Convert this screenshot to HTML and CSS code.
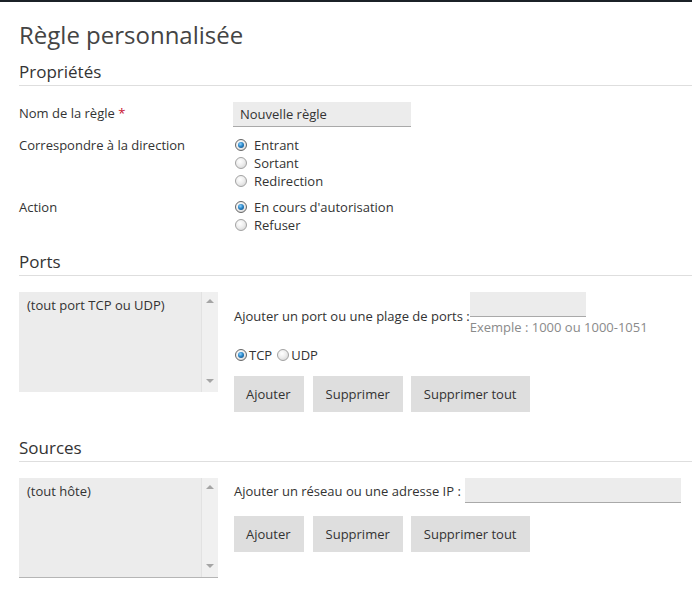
FILE: index.html
```html
<!DOCTYPE html>
<html lang="fr">
<head>
<meta charset="utf-8">
<title>Règle personnalisée</title>
<link rel="stylesheet" href="styles.css">
</head>
<body>
<div class="topbar"></div>
<main class="page">
  <h1 class="title">Règle personnalisée</h1>

  <h2 class="section-title">Propriétés</h2>
  <div class="props">
    <div class="row row-name">
      <div class="label">Nom de la règle <span class="req">*</span></div>
      <div class="field"><input class="text-input name-input" type="text" value="Nouvelle règle"></div>
    </div>
    <div class="row">
      <div class="label">Correspondre à la direction</div>
      <div class="field radios">
        <div class="radio-line"><span class="radio checked"></span>Entrant</div>
        <div class="radio-line"><span class="radio"></span>Sortant</div>
        <div class="radio-line"><span class="radio"></span>Redirection</div>
      </div>
    </div>
    <div class="row">
      <div class="label">Action</div>
      <div class="field radios">
        <div class="radio-line"><span class="radio checked"></span>En cours d'autorisation</div>
        <div class="radio-line"><span class="radio"></span>Refuser</div>
      </div>
    </div>
  </div>

  <h2 class="section-title">Ports</h2>
  <div class="section ports">
    <div class="listbox">
      <div class="list-items">(tout port TCP ou UDP)</div>
      <div class="scrollbar"><span class="sb-btn"><span class="arrow-up"></span></span><span class="sb-btn"><span class="arrow-down"></span></span></div>
    </div>
    <div class="controls">
      <div class="port-row">
        <span class="port-label">Ajouter un port ou une plage de ports :</span>
        <div class="port-field">
          <input class="text-input port-input" type="text">
          <div class="hint">Exemple : 1000 ou 1000-1051</div>
        </div>
      </div>
      <div class="proto-row">
        <span class="radio checked tight"></span><span class="proto">TCP</span>
        <span class="radio tight"></span><span class="proto">UDP</span>
      </div>
      <div class="buttons">
        <button class="btn btn-add">Ajouter</button>
        <button class="btn">Supprimer</button>
        <button class="btn">Supprimer tout</button>
      </div>
    </div>
  </div>

  <h2 class="section-title">Sources</h2>
  <div class="section sources">
    <div class="listbox bordered">
      <div class="list-items">(tout hôte)</div>
      <div class="scrollbar"><span class="sb-btn"><span class="arrow-up"></span></span><span class="sb-btn"><span class="arrow-down"></span></span></div>
    </div>
    <div class="controls">
      <div class="ip-row">
        <span class="ip-label">Ajouter un réseau ou une adresse IP :</span>
        <input class="text-input ip-input" type="text">
      </div>
      <div class="buttons buttons-ip">
        <button class="btn btn-add">Ajouter</button>
        <button class="btn">Supprimer</button>
        <button class="btn">Supprimer tout</button>
      </div>
    </div>
  </div>
</main>
</body>
</html>
```

FILE: styles.css
```css
* { box-sizing: border-box; }

html, body {
  margin: 0;
  padding: 0;
  background: #fff;
}

body {
  font-family: "Open Sans", "Noto Sans", sans-serif;
  font-size: 13px;
  line-height: 18px;
  color: #333;
}

.topbar {
  height: 2px;
  background: #1b2127;
}

.page {
  padding-left: 19px;
}

.title {
  margin: 17px 0 0;
  font-size: 24px;
  line-height: 32px;
  font-weight: 400;
  color: #444;
}

.section-title {
  margin: 9px 0 0;
  font-size: 17px;
  line-height: 23px;
  font-weight: 400;
  color: #333;
  padding-bottom: 2px;
  border-bottom: 1px solid #dedede;
}

.section-title + .props,
.section-title + .section {
  margin-top: 16px;
}

.props {
  display: flex;
  flex-direction: column;
  gap: 8px;
  margin-bottom: 16px;
}

.props + .section-title { margin-top: 0; }

.row {
  display: flex;
  align-items: flex-start;
}

.row-name { margin-bottom: 1px; }

.label {
  width: 215px;
  flex: none;
}

.row-name .label { padding-top: 2px; }

.req { color: #c8102e; }

.text-input {
  font-family: inherit;
  font-size: 13px;
  color: #333;
  height: 25px;
  border: none;
  border-bottom: 1px solid #a9a9a9;
  background: #ececec;
  padding: 0 7px;
  margin: 0;
  outline: none;
  display: block;
}

.name-input {
  width: 178px;
  margin-left: -1px;
}

.radios {
  display: flex;
  flex-direction: column;
}

.radio-line {
  display: flex;
  align-items: center;
  height: 18px;
}

.radio {
  width: 12px;
  height: 12px;
  border-radius: 50%;
  border: 1px solid #a2a2a2;
  background: radial-gradient(circle at 40% 35%, #ffffff 0%, #eeeeee 45%, #cfcfcf 100%);
  margin-left: 1px;
  margin-right: 7px;
  flex: none;
  display: inline-flex;
  align-items: center;
  justify-content: center;
}

.radio.checked {
  border-color: #666;
  background: radial-gradient(circle at 40% 35%, #ffffff 0%, #e8e8e8 60%, #bdbdbd 100%);
}

.radio.checked::after {
  content: "";
  width: 6px;
  height: 6px;
  border-radius: 50%;
  background: radial-gradient(circle at 40% 35%, #8fd3ff 0%, #2a86c8 45%, #0b3f73 100%);
}

.section {
  display: flex;
  align-items: flex-start;
  gap: 16px;
}

.ports { margin-bottom: 24px; }

.section + .section-title { margin-top: 0; }

.listbox {
  width: 199px;
  height: 100px;
  flex: none;
  display: flex;
  background: #ececec;
}

.listbox.bordered {
  border-bottom: 1px solid #b5b5b5;
}

.list-items {
  flex: 1;
  padding: 4px 8px;
}

.scrollbar {
  width: 17px;
  flex: none;
  background: #f0f0f0;
  border-left: 1px solid #e2e2e2;
  display: flex;
  flex-direction: column;
  justify-content: space-between;
  padding-bottom: 3px;
}

.sb-btn {
  height: 17px;
  display: flex;
  align-items: center;
  justify-content: center;
}

.arrow-up {
  width: 0;
  height: 0;
  border-left: 4px solid transparent;
  border-right: 4px solid transparent;
  border-bottom: 4px solid #a5a5a5;
}

.arrow-down {
  width: 0;
  height: 0;
  border-left: 4px solid transparent;
  border-right: 4px solid transparent;
  border-top: 4px solid #a5a5a5;
}

.controls {
  display: flex;
  flex-direction: column;
}

.port-row {
  display: flex;
  align-items: flex-start;
}

.port-label {
  padding-top: 15px;
}

.port-field {
  display: flex;
  flex-direction: column;
}

.port-input { width: 116px; }

.hint {
  margin-top: 1px;
  color: #8a8a8a;
}

.proto-row {
  display: flex;
  align-items: center;
  height: 18px;
  margin-top: 10px;
}

.radio.tight {
  margin-right: 2px;
}

.proto { margin-right: 4px; }

.buttons {
  display: flex;
  gap: 8px;
  margin-top: 12px;
}

.buttons-ip { margin-top: 13px; }

.btn {
  font-family: inherit;
  font-size: 13px;
  color: #333;
  background: #dedede;
  border: none;
  border-radius: 0;
  height: 36px;
  padding: 0 13px;
  margin: 0;
  cursor: pointer;
}

.btn.btn-add {
  padding: 0 13px 0 12px;
  margin-right: 1px;
}

.ip-row {
  display: flex;
  align-items: center;
}

.ip-input {
  width: 216px;
  margin-left: 4px;
}
```
